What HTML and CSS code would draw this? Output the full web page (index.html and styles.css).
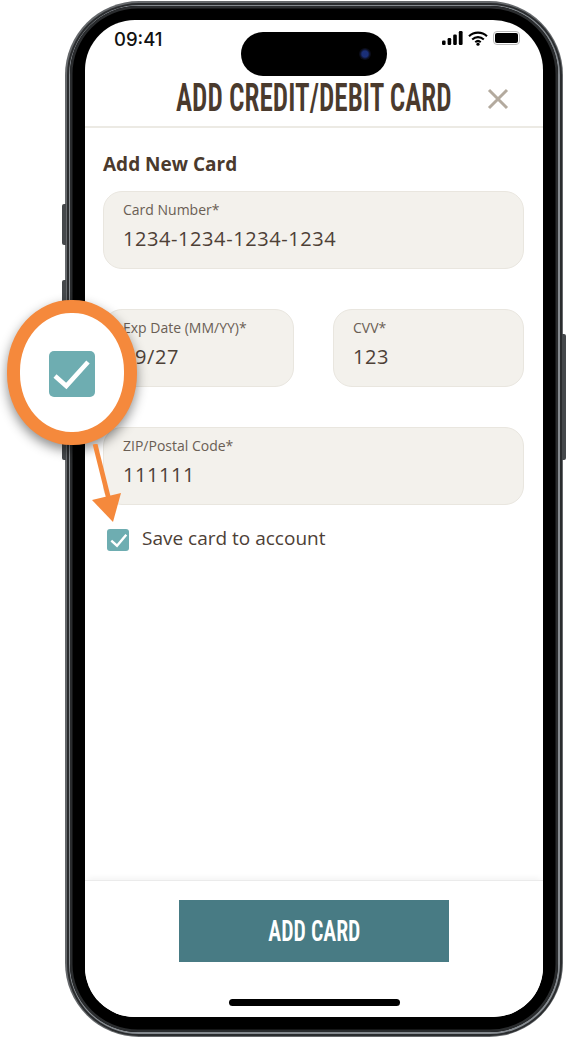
FILE: index.html
```html
<!DOCTYPE html>
<html lang="en">
<head>
<meta charset="utf-8">
<title>Add Credit/Debit Card</title>
<link rel="stylesheet" href="styles.css">
</head>
<body>
<div class="canvas">
  <div class="side side-mute"></div>
  <div class="side side-up"></div>
  <div class="side side-down"></div>
  <div class="side side-power"></div>
  <div class="phone">
    <div class="rim">
      <div class="edge">
        <div class="bezel">
          <div class="screen">
            <div class="island"><span class="camera"></span></div>
            <div class="status">
              <span class="time">09:41</span>
              <span class="status-icons">
                <svg class="ic-signal" viewBox="0 0 21 14" width="21" height="14"><rect x="0" y="9.5" width="3.6" height="4.5" rx="1.2"/><rect x="5.6" y="7" width="3.6" height="7" rx="1.2"/><rect x="11.2" y="3.5" width="3.6" height="10.5" rx="1.2"/><rect x="16.8" y="0" width="3.8" height="14" rx="1.2"/></svg>
                <svg class="ic-wifi" viewBox="0 0 20 15" width="20" height="15"><path d="M1 5.2a13 13 0 0 1 18 0M4.2 8.4a8.5 8.5 0 0 1 11.6 0M7.3 11.2a4 4 0 0 1 5.4 0" fill="none" stroke="#000" stroke-width="2.1"/><circle cx="10" cy="13.2" r="1.6"/></svg>
                <span class="battery"><span class="battery-fill"></span></span>
              </span>
            </div>
            <header class="head">
              <h1 class="title"><span class="title-text">ADD CREDIT/DEBIT CARD</span></h1>
              <svg class="close" viewBox="0 0 22 22" width="22" height="22"><path d="M2 2l18 18M20 2L2 20" fill="none" stroke="#b3aa9e" stroke-width="3"/></svg>
            </header>
            <main class="form">
              <h2 class="form-title">Add New Card</h2>
              <div class="field"><span class="label">Card Number*</span><span class="value">1234-1234-1234-1234</span></div>
              <div class="pair">
                <div class="field"><span class="label">Exp Date (MM/YY)*</span><span class="value">09/27</span></div>
                <div class="field"><span class="label">CVV*</span><span class="value">123</span></div>
              </div>
              <div class="field"><span class="label">ZIP/Postal Code*</span><span class="value">111111</span></div>
              <label class="save">
                <span class="box"><svg viewBox="0 0 22 22" width="22" height="22"><path d="M4.3 11.7l5.7 5L19.3 5.7" fill="none" stroke="#fff" stroke-width="2.4"/></svg></span>
                <span class="save-text">Save card to account</span>
              </label>
            </main>
            <footer class="foot">
              <button class="cta"><span class="cta-text">ADD CARD</span></button>
              <div class="home"></div>
            </footer>
          </div>
        </div>
      </div>
    </div>
  </div>
  <div class="callout">
    <span class="callout-box"><svg viewBox="0 0 46 46" width="46" height="46"><path d="M6 25l11.3 10L39 11" fill="none" stroke="#fff" stroke-width="4.6"/></svg></span>
  </div>
  <svg class="arrow" viewBox="0 0 60 90" width="60" height="90"><path d="M5 0L20 60" fill="none" stroke="#f5893c" stroke-width="4.8"/><path d="M2 56L31 49L23 78Z" fill="#f5893c"/></svg>
</div>
</body>
</html>
```
FILE: styles.css
```css
* { box-sizing: border-box; }
html, body { margin: 0; padding: 0; background: #fff; }
body { overflow: hidden; }
.canvas { position: relative; width: 567px; height: 1038px; padding: 1px 4px 0 65px; font-family: "Open Sans", "Noto Sans", sans-serif; color: #4a3c31; }

.phone { width: 498px; height: 1036px; border-radius: 74px; background: #66696c; padding: 1.5px; }
.rim { height: 100%; border-radius: 72px; background: #2a2c2e; padding: 2px; }
.edge { height: 100%; border-radius: 70px; background: #858a8f; padding: 1.5px; }
.bezel { height: 100%; border-radius: 68px; background: #000; padding: 14px 15px 15px; box-shadow: inset 0 0 0 2.5px #2a2c2e; }
.screen { position: relative; height: 100%; border-radius: 50px; background: #fff; display: flex; flex-direction: column; overflow: hidden; }

.side { position: absolute; width: 4px; background: #45484b; }
.side-mute { left: 62px; top: 204px; height: 41px; border-radius: 2px 0 0 2px; }
.side-up { left: 62px; top: 280px; height: 70px; border-radius: 2px 0 0 2px; }
.side-down { left: 62px; top: 375px; height: 85px; border-radius: 2px 0 0 2px; }
.side-power { left: 562px; top: 334px; height: 126px; width: 4px; border-radius: 0 2px 2px 0; }

.island { position: absolute; left: 156px; top: 12px; width: 146px; height: 44px; border-radius: 22px; background: #000; }
.camera { position: absolute; right: 16px; top: 16px; width: 12px; height: 12px; border-radius: 50%; background: radial-gradient(circle, #1a2f78 0 35%, #0b0d1c 60%, #050507 100%); }

.status { height: 33px; flex: none; display: flex; justify-content: space-between; align-items: flex-end; padding: 0 23px 0 29px; }
.time { font: 500 18.5px/24px "Inter", "Liberation Sans", sans-serif; color: #111; position: relative; top: -2px; }
.status-icons { display: flex; align-items: center; gap: 5px; height: 20px; position: relative; top: -5px; }
.status-icons svg { display: block; fill: #000; }
.battery { width: 27px; height: 14px; border: 1.5px solid #bbb; border-radius: 4px; padding: 1px; display: block; }
.battery-fill { display: block; height: 100%; background: #000; border-radius: 2px; }

.head { height: 75px; flex: none; position: relative; display: flex; align-items: center; justify-content: center; border-bottom: 2px solid #eceae4; padding-top: 17px; }
.title { margin: 0; font: 600 38px/44px "Roboto", "Liberation Sans", sans-serif; font-stretch: 75%; color: #4a3a2d; white-space: nowrap; }
.title-text { display: inline-block; transform: scaleX(.715); }
.close { position: absolute; left: 402px; top: 35px; }

.form { flex: 1; padding: 23px 19px 0 18px; display: flex; flex-direction: column; gap: 40px; }
.form-title { margin: 0 0 -26px; font: 700 19px/26px "Open Sans", sans-serif; color: #4a3a2d; }
.field { height: 78px; border: 1.5px solid #e9e6df; border-radius: 19px; background: #f3f1ec; padding: 9px 19px; display: flex; flex-direction: column; gap: 5px; }
.label { font-size: 14px; line-height: 18px; color: #6a5e54; }
.value { font-size: 20px; line-height: 30px; letter-spacing: .58px; color: #4d4036; }
.pair { display: grid; grid-template-columns: 191px 191px; justify-content: space-between; }
.save { display: flex; align-items: center; gap: 13px; margin: -17px 0 0 4px; height: 24px; }
.box { width: 22px; height: 22px; border-radius: 3px; background: #6eadb1; display: block; }
.box svg { display: block; }
.save-text { font-size: 19px; line-height: 24px; color: #4d4036; position: relative; top: -2px; }

.foot { flex: none; height: 137px; border-top: 1px solid #ebebeb; box-shadow: 0 -5px 6px -3px rgba(0,0,0,.05); display: flex; flex-direction: column; align-items: center; background: #fff; position: relative; }
.cta { margin-top: 19px; width: 270px; height: 62px; border: 0; border-radius: 0; background: #487b84; color: #fff; font: 600 29px/62px "Roboto", "Liberation Sans", sans-serif; font-stretch: 75%; padding: 0; }
.cta-text { display: inline-block; transform: scaleX(.75); }
.home { margin-top: 37px; width: 171px; height: 7px; border-radius: 4px; background: #000; }

.callout { position: absolute; left: 7px; top: 300px; width: 130px; height: 145px; border-radius: 64px / 71px; border: 13px solid #f5893c; background: #fff; display: flex; align-items: center; justify-content: center; padding-top: 3px; box-shadow: 0 5px 12px rgba(0,0,0,.45); }
.callout-box { width: 46px; height: 46px; border-radius: 5px; background: #6eadb1; display: block; }
.callout-box svg { display: block; }
.arrow { position: absolute; left: 90px; top: 444px; }
```
